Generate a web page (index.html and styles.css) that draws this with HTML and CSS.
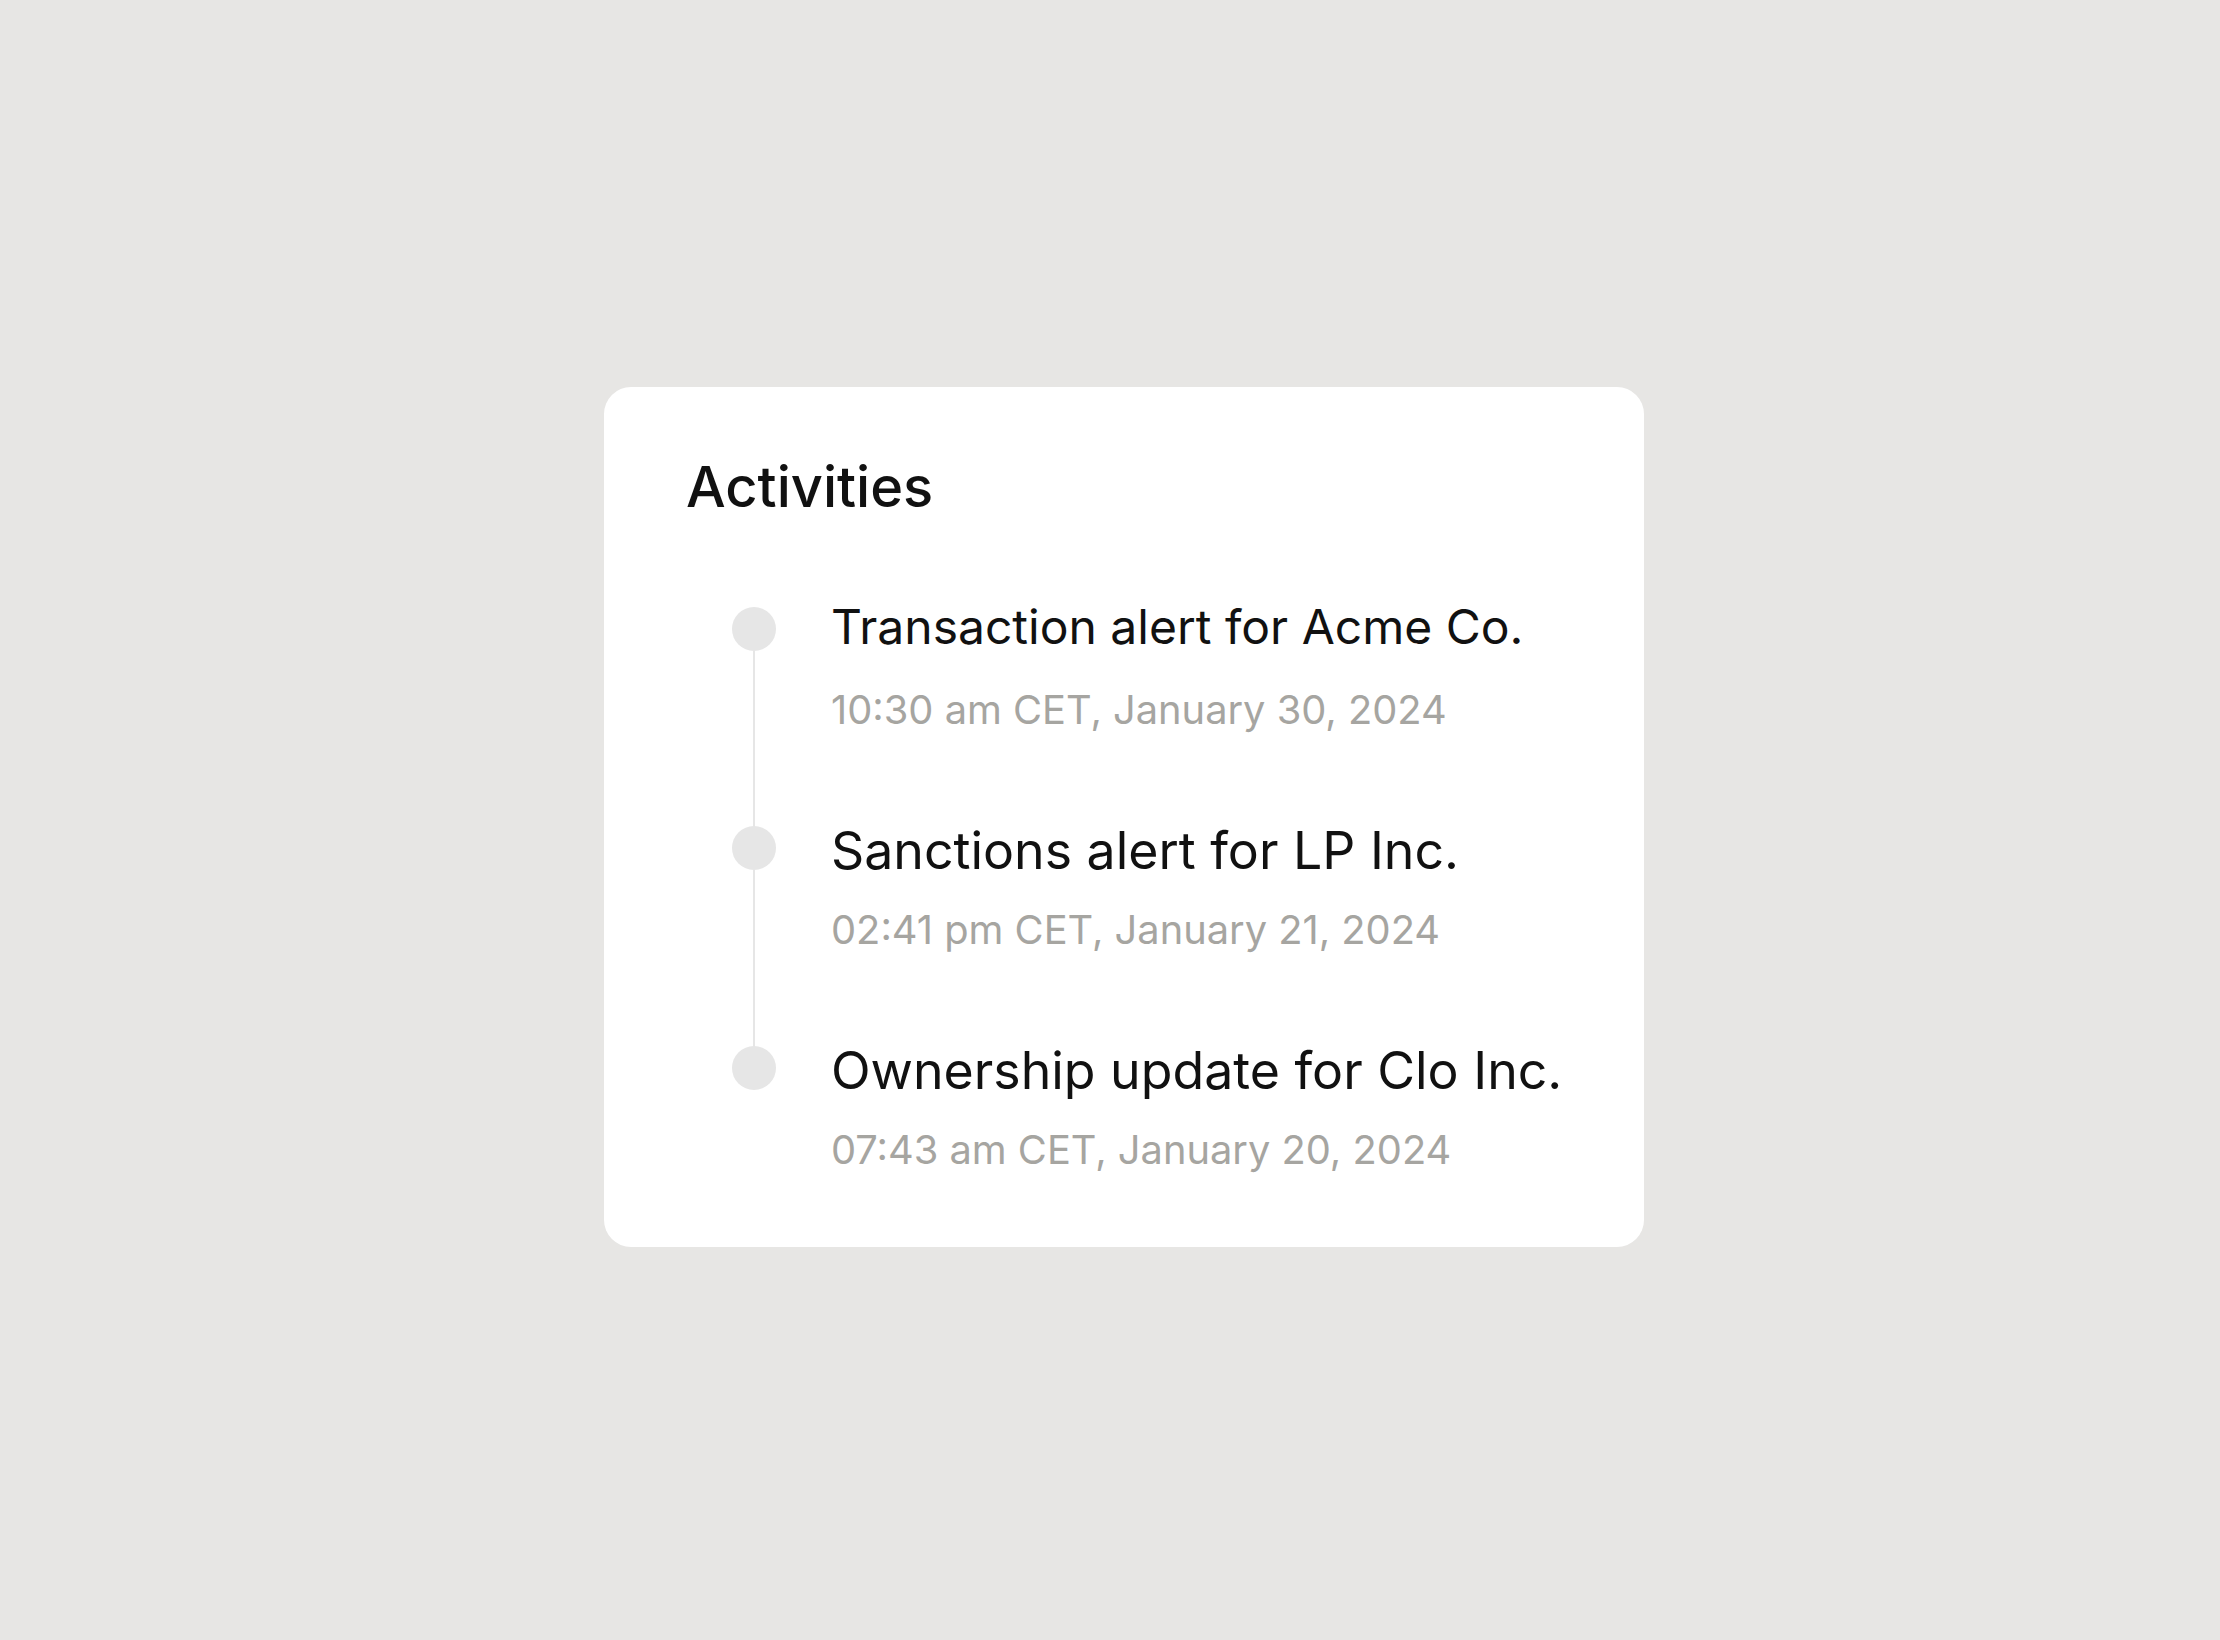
FILE: index.html
```html
<!DOCTYPE html>
<html lang="en">
<head>
  <meta charset="UTF-8">
  <meta name="viewport" content="width=device-width, initial-scale=1.0">
  <title>Activities</title>
  <link rel="stylesheet" href="styles.css">
</head>
<body>
  <div class="card">
    <h2 class="card-title">Activities</h2>

    <ul class="timeline">
      <li class="timeline-item">
        <div class="timeline-track">
          <span class="timeline-dot"></span>
          <span class="timeline-line"></span>
        </div>
        <div class="timeline-body">
          <p class="timeline-text">Transaction alert for Acme Co.</p>
          <p class="timeline-time">10:30 am CET, January 30, 2024</p>
        </div>
      </li>
      <li class="timeline-item timeline-item--lg">
        <div class="timeline-track">
          <span class="timeline-dot"></span>
          <span class="timeline-line"></span>
        </div>
        <div class="timeline-body">
          <p class="timeline-text">Sanctions alert for LP Inc.</p>
          <p class="timeline-time">02:41 pm CET, January 21, 2024</p>
        </div>
      </li>
      <li class="timeline-item timeline-item--lg">
        <div class="timeline-track">
          <span class="timeline-dot"></span>
        </div>
        <div class="timeline-body">
          <p class="timeline-text">Ownership update for Clo Inc.</p>
          <p class="timeline-time">07:43 am CET, January 20, 2024</p>
        </div>
      </li>
    </ul>
  </div>
</body>
</html>
```

FILE: styles.css
```css
/* Global Styles */
body {
  font-family: 'Inter', 'Noto Sans', sans-serif;
  margin: 0;
  padding: 0 0 6px 28px;
  min-height: 100vh;
  box-sizing: border-box;
  background-color: #e7e6e4;
  color: #111;
  display: flex;
  align-items: center;
  justify-content: center;
}

/* Card */
.card {
  width: 1040px;
  box-sizing: border-box;
  padding: 66px 80px 74px 82px;
  background-color: #fff;
  border-radius: 27px;
}

.card-title {
  margin: 0 0 77px;
  font-size: 56px;
  line-height: 68px;
  font-weight: 500;
  color: #111;
}

/* Timeline */
.timeline {
  list-style: none;
  margin: 0;
  padding: 0 0 0 46px;
}

.timeline-item {
  display: flex;
  gap: 55px;
}

.timeline-track {
  width: 44px;
  flex-shrink: 0;
  display: flex;
  flex-direction: column;
  align-items: center;
  padding-top: 9px;
}

.timeline-dot {
  width: 44px;
  height: 44px;
  border-radius: 50%;
  background-color: #e6e6e6;
  flex-shrink: 0;
}

.timeline-line {
  flex: 1;
  width: 2px;
  margin-bottom: -8px;
  background-color: #e6e6e6;
}

.timeline-body {
  padding-bottom: 86px;
}

.timeline-item:last-child .timeline-body {
  padding-bottom: 0;
}

.timeline-text {
  margin: 0;
  font-size: 48px;
  line-height: 57px;
  color: #111;
}

.timeline-time {
  margin: 31px 0 0;
  font-size: 39.8px;
  line-height: 47px;
  color: #a6a5a1;
}

/* Later entries are set a touch larger */
.timeline-item--lg .timeline-track {
  padding-top: 7px;
}

.timeline-item--lg .timeline-text {
  font-size: 51.8px;
  line-height: 62px;
}

.timeline-item--lg .timeline-time {
  margin-top: 25px;
}
```
